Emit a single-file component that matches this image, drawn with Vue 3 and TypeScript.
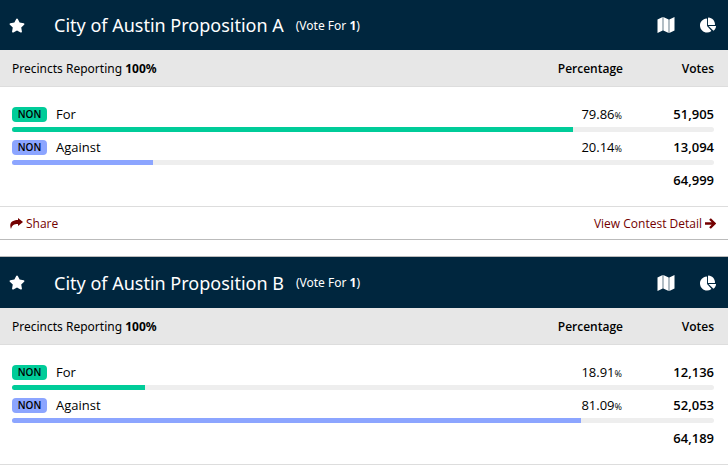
<script setup lang="ts">
interface Choice {
  name: string
  party: string
  tone: 'green' | 'blue'
  percent: number
  votes: number
}

interface Contest {
  id: string
  title: string
  voteFor: number
  reporting: number
  choices: Choice[]
  links: boolean
}

const contests: Contest[] = [
  {
    id: 'prop-a',
    title: 'City of Austin Proposition A',
    voteFor: 1,
    reporting: 100,
    choices: [
      { name: 'For', party: 'NON', tone: 'green', percent: 79.86, votes: 51905 },
      { name: 'Against', party: 'NON', tone: 'blue', percent: 20.14, votes: 13094 },
    ],
    links: true,
  },
  {
    id: 'prop-b',
    title: 'City of Austin Proposition B',
    voteFor: 1,
    reporting: 100,
    choices: [
      { name: 'For', party: 'NON', tone: 'green', percent: 18.91, votes: 12136 },
      { name: 'Against', party: 'NON', tone: 'blue', percent: 81.09, votes: 52053 },
    ],
    links: false,
  },
]

const format = (n: number): string => n.toLocaleString('en-US')
const total = (contest: Contest): number => contest.choices.reduce((sum, c) => sum + c.votes, 0)
</script>

<template>
  <main class="contests">
    <section v-for="contest in contests" :key="contest.id" class="contest">
      <header class="heading">
        <button type="button" class="icon-button" aria-label="Favorite">
          <svg class="star" viewBox="0 0 576 512" aria-hidden="true">
            <path d="M259 18 194 150 48 171c-26 4-37 36-18 55l106 103-25 145c-4 26 23 46 47 34l130-69 130 69c24 12 51-8 47-34l-25-145 106-103c19-19 8-51-18-55l-146-21-65-132c-12-24-46-24-58 0z" />
          </svg>
        </button>
        <h2 class="title">{{ contest.title }}</h2>
        <span class="vote-for">(Vote For <b>{{ contest.voteFor }}</b>)</span>
        <button type="button" class="icon-button map-button" aria-label="Map">
          <svg class="map" viewBox="0 0 18 18" aria-hidden="true">
            <path d="M0.500 3.500 5.700 1v13.500L0.500 17zM6.300 1l5.400 2.500V17l-5.400-2.500zM12.300 3.500l5.200-2.500v13.500L12.300 17z" />
          </svg>
        </button>
        <button type="button" class="icon-button" aria-label="Chart">
          <svg class="pie" viewBox="0 0 544 512" aria-hidden="true">
            <path d="M528 288H290l158 158c6 6 16 7 22 1 39-36 66-86 74-141 1-10-7-18-16-18zm-16-48C503 101 411 9 289 0c-9-1-17 7-17 16v240h224c9 0 17-8 16-16zM240 288V50c0-10-9-18-18-16C87 51-4 155 0 279c5 128 113 234 241 233 50-1 97-17 135-43 8-6 8-17 2-24z" />
          </svg>
        </button>
      </header>

      <table class="results">
        <thead>
          <tr>
            <th class="reporting" scope="col">Precincts Reporting <b>{{ contest.reporting }}%</b></th>
            <th class="percent" scope="col">Percentage</th>
            <th class="votes" scope="col">Votes</th>
          </tr>
        </thead>
        <tbody v-for="choice in contest.choices" :key="choice.name">
          <tr class="choice">
            <td class="name">
              <span class="label">
                <span class="party" :class="choice.tone">{{ choice.party }}</span>
                <span>{{ choice.name }}</span>
              </span>
            </td>
            <td class="percent">{{ choice.percent.toFixed(2) }}<small>%</small></td>
            <td class="votes">{{ format(choice.votes) }}</td>
          </tr>
          <tr>
            <td class="bar" colspan="3">
              <div class="track">
                <div class="fill" :class="choice.tone" :style="{ width: choice.percent + '%' }"></div>
              </div>
            </td>
          </tr>
        </tbody>
        <tfoot>
          <tr class="choice">
            <td class="votes" colspan="3">{{ format(total(contest)) }}</td>
          </tr>
        </tfoot>
      </table>

      <footer v-if="contest.links" class="links">
        <a href="#share">
          <svg class="share" viewBox="0 0 13 11" aria-hidden="true">
            <path d="M8 0l5 4-5 4V6C4 6 2 7 1 11-1 6 1 2 8 2z" />
          </svg>
          <span>Share</span>
        </a>
        <a href="#detail">
          <span>View Contest Detail</span>
          <svg class="arrow" viewBox="0 0 11 11" aria-hidden="true">
            <path d="M0 5.500h9M5 1l4.500 4.500L5 10" />
          </svg>
        </a>
      </footer>
    </section>
  </main>
</template>

<style>
body {
  margin: 0;
  background: #fff;
}
</style>

<style scoped>
.contests {
  display: flex;
  flex-direction: column;
  gap: 16px;
  font-family: "Open Sans", "Noto Sans", sans-serif;
  font-size: 13px;
  color: #000;
}

.contest + .contest {
  border-top: 1px solid #bbb;
}

.heading {
  display: flex;
  align-items: center;
  box-sizing: border-box;
  height: 51px;
  padding: 0 12px 0 9px;
  background: #00263e;
  color: #fff;
  font-family: "Noto Sans", "Open Sans", sans-serif;
}

.contest:first-child .heading {
  height: 50px;
}

.icon-button {
  display: flex;
  padding: 0;
  border: 0;
  background: none;
  color: inherit;
  cursor: pointer;
}

.icon-button svg {
  fill: currentColor;
}

.star {
  width: 16px;
  height: 15px;
}

.map {
  width: 18px;
  height: 18px;
}

.pie {
  width: 16px;
  height: 16px;
}

.map-button {
  margin-left: auto;
  margin-right: 25px;
}

.title {
  margin: 0 12px 0 29px;
  font-size: 18px;
  font-weight: 400;
  line-height: 24px;
}

.vote-for {
  font-size: 12px;
}

.results {
  width: 100%;
  border-collapse: separate;
  border-spacing: 0;
  border-bottom: 1px solid #ddd;
}

th,
td {
  padding: 0;
  text-align: left;
}

th {
  height: 36px;
  border-bottom: 1px solid #ddd;
  background: #e7e7e7;
  font-size: 12px;
  font-weight: 600;
}

.reporting {
  padding-left: 12px;
  font-family: "Noto Sans", "Open Sans", sans-serif;
  font-weight: 400;
}

.percent {
  width: 100px;
  text-align: right;
}

.votes {
  width: 91px;
  padding-right: 14px;
  text-align: right;
}

td.votes {
  font-weight: 600;
}

td.percent {
  padding-right: 1px;
  width: 99px;
}

small {
  font-size: 9px;
}

.choice td {
  height: 26px;
  padding-top: 2px;
}

thead + tbody .choice td {
  padding-top: 14px;
}

tfoot .choice td {
  padding-bottom: 13px;
}

.name {
  padding-left: 12px;
}

.label {
  display: flex;
  align-items: center;
  gap: 9px;
}

.party {
  box-sizing: border-box;
  width: 35px;
  border-radius: 4px;
  font-size: 10px;
  font-weight: 600;
  line-height: 15px;
  text-align: center;
}

.bar {
  padding: 0 14px 0 12px;
}

.track {
  height: 5px;
  overflow: hidden;
  border-radius: 3px;
  background: #eee;
}

.fill {
  height: 100%;
}

.green {
  background: #00cc99;
}

.blue {
  background: #8ca5ff;
}

.links {
  display: flex;
  align-items: center;
  justify-content: space-between;
  height: 32px;
  padding: 0 12px 0 10px;
  border-bottom: 1px solid #bbb;
  font-size: 12px;
}

.links a {
  display: flex;
  align-items: center;
  gap: 3px;
  color: #730000;
  text-decoration: none;
}

.share {
  width: 13px;
  height: 11px;
  fill: currentColor;
}

.arrow {
  width: 11px;
  height: 11px;
  fill: none;
  stroke: currentColor;
  stroke-width: 2.4;
}
</style>
